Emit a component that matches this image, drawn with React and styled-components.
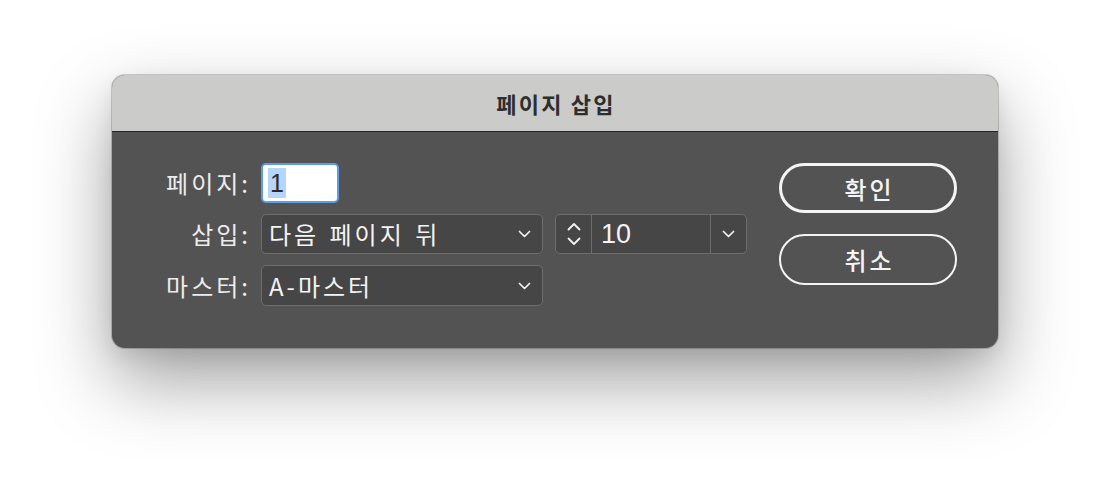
import React from "react";
import styled, { createGlobalStyle } from "styled-components";

const Global = createGlobalStyle`
  html, body { margin: 0; padding: 0; background: #ffffff; }
  body { width: 1110px; height: 496px; overflow: hidden; font-family: "Noto Sans CJK KR", "Noto Sans", sans-serif; }
`;

const Stage = styled.div`
  padding: 75px 0 0 112px;
`;

const Window = styled.div`
  width: 886px;
  height: 273px;
  box-sizing: border-box;
  border-radius: 13px;
  overflow: hidden;
  background: #535353;
  box-shadow: 0 0 0 1px rgba(0, 0, 0, 0.18), 0 32px 75px rgba(0, 0, 0, 0.38), 0 8px 20px rgba(0, 0, 0, 0.08);
  display: flex;
  flex-direction: column;
`;

const TitleBar = styled.div`
  height: 56px;
  background: #cbcbc9;
  border-bottom: 1px solid #262626;
  display: flex;
  align-items: center;
  justify-content: center;
  font-size: 22px;
  font-weight: 700;
  color: #2e2e2e;
  letter-spacing: 2.2px;
  padding-left: 2px;
`;

const Body = styled.div`
  flex: 1;
  display: flex;
  justify-content: space-between;
  align-items: flex-start;
  padding: 31px 41px 0 46px;
`;

const Form = styled.div`
  display: grid;
  grid-template-columns: 90px auto;
  align-content: start;
  column-gap: 13px;
  row-gap: 11px;
  align-items: center;
`;

const Label = styled.div`
  text-align: right;
  color: #ececec;
  font-size: 24px;
  line-height: 30px;
  letter-spacing: 3px;
  margin-right: -3px;
  white-space: nowrap;
`;

const Row = styled.div`
  display: flex;
  gap: 12px;
  align-items: center;
`;

const PageInput = styled.div`
  width: 78px;
  height: 40px;
  box-sizing: border-box;
  background: #ffffff;
  border: 2px solid #5d9de6;
  border-radius: 5px;
  display: flex;
  align-items: center;
  padding-left: 5px;
  font-family: "Liberation Sans", Arial, sans-serif;
  font-size: 25px;
  color: #2a2a2a;
`;

const Selection = styled.span`
  background: #b5d5fb;
  padding: 0 2px;
  line-height: 30px;
`;

const Select = styled.div`
  width: ${(p) => p.$w}px;
  height: ${(p) => p.$h || 40}px;
  box-sizing: border-box;
  background: #464646;
  border: 1.5px solid #6e6e6e;
  border-radius: 5px;
  display: flex;
  align-items: center;
  justify-content: space-between;
  padding: 0 11px 0 7px;
  color: #f4f4f4;
  font-size: 24px;
  line-height: 30px;
  letter-spacing: 3px;
  word-spacing: 2px;
  white-space: nowrap;
`;

const Combo = styled.div`
  width: 192px;
  height: 40px;
  box-sizing: border-box;
  background: #464646;
  border: 1.5px solid #6e6e6e;
  border-radius: 5px;
  display: flex;
  align-items: stretch;
`;

const Stepper = styled.div`
  width: 35px;
  border-right: 1.5px solid #6e6e6e;
  display: flex;
  flex-direction: column;
  align-items: center;
  justify-content: center;
  gap: 6px;
`;

const Value = styled.div`
  flex: 1;
  display: flex;
  align-items: center;
  padding-left: 9px;
  font-family: "Liberation Sans", Arial, sans-serif;
  font-size: 27px;
  color: #f4f4f4;
  border-right: 1.5px solid #6e6e6e;
`;

const DropZone = styled.div`
  width: 35px;
  display: flex;
  align-items: center;
  justify-content: center;
`;

const Buttons = styled.div`
  display: flex;
  flex-direction: column;
  gap: 21px;
`;

const Button = styled.div`
  width: 178px;
  height: ${(p) => (p.$primary ? 50 : 51)}px;
  box-sizing: border-box;
  border: ${(p) => (p.$primary ? 3 : 2)}px solid #f4f4f4;
  border-radius: 26px;
  display: flex;
  align-items: center;
  justify-content: center;
  color: #f4f4f4;
  font-size: 24px;
  font-weight: 500;
  letter-spacing: 3px;
  padding-left: 3px;
`;

const Chevron = ({ up }) => (
  <svg width="14" height="9" viewBox="0 0 14 9" fill="none">
    <path
      d={up ? "M1.5 7.5 L7 2 L12.5 7.5" : "M1.5 1.5 L7 7 L12.5 1.5"}
      stroke="#f2f2f2"
      strokeWidth="1.8"
      strokeLinecap="round"
      strokeLinejoin="round"
    />
  </svg>
);

const SmallChevron = () => (
  <svg width="13" height="8" viewBox="0 0 13 8" fill="none">
    <path d="M1.5 1.5 L6.5 6.5 L11.5 1.5" stroke="#f2f2f2" strokeWidth="1.7" strokeLinecap="round" strokeLinejoin="round" />
  </svg>
);

export default function App() {
  return (
    <>
      <Global />
      <Stage>
        <Window>
          <TitleBar>페이지 삽입</TitleBar>
          <Body>
            <Form>
              <Label>페이지:</Label>
              <PageInput>
                <Selection>1</Selection>
              </PageInput>
              <Label>삽입:</Label>
              <Row>
                <Select $w={282}>
                  <span>다음 페이지 뒤</span>
                  <SmallChevron />
                </Select>
                <Combo>
                  <Stepper>
                    <Chevron up />
                    <Chevron />
                  </Stepper>
                  <Value>10</Value>
                  <DropZone>
                    <SmallChevron />
                  </DropZone>
                </Combo>
              </Row>
              <Label>마스터:</Label>
              <Select $w={282} $h={41}>
                <span>A-마스터</span>
                <SmallChevron />
              </Select>
            </Form>
            <Buttons>
              <Button $primary>확인</Button>
              <Button>취소</Button>
            </Buttons>
          </Body>
        </Window>
      </Stage>
    </>
  );
}
